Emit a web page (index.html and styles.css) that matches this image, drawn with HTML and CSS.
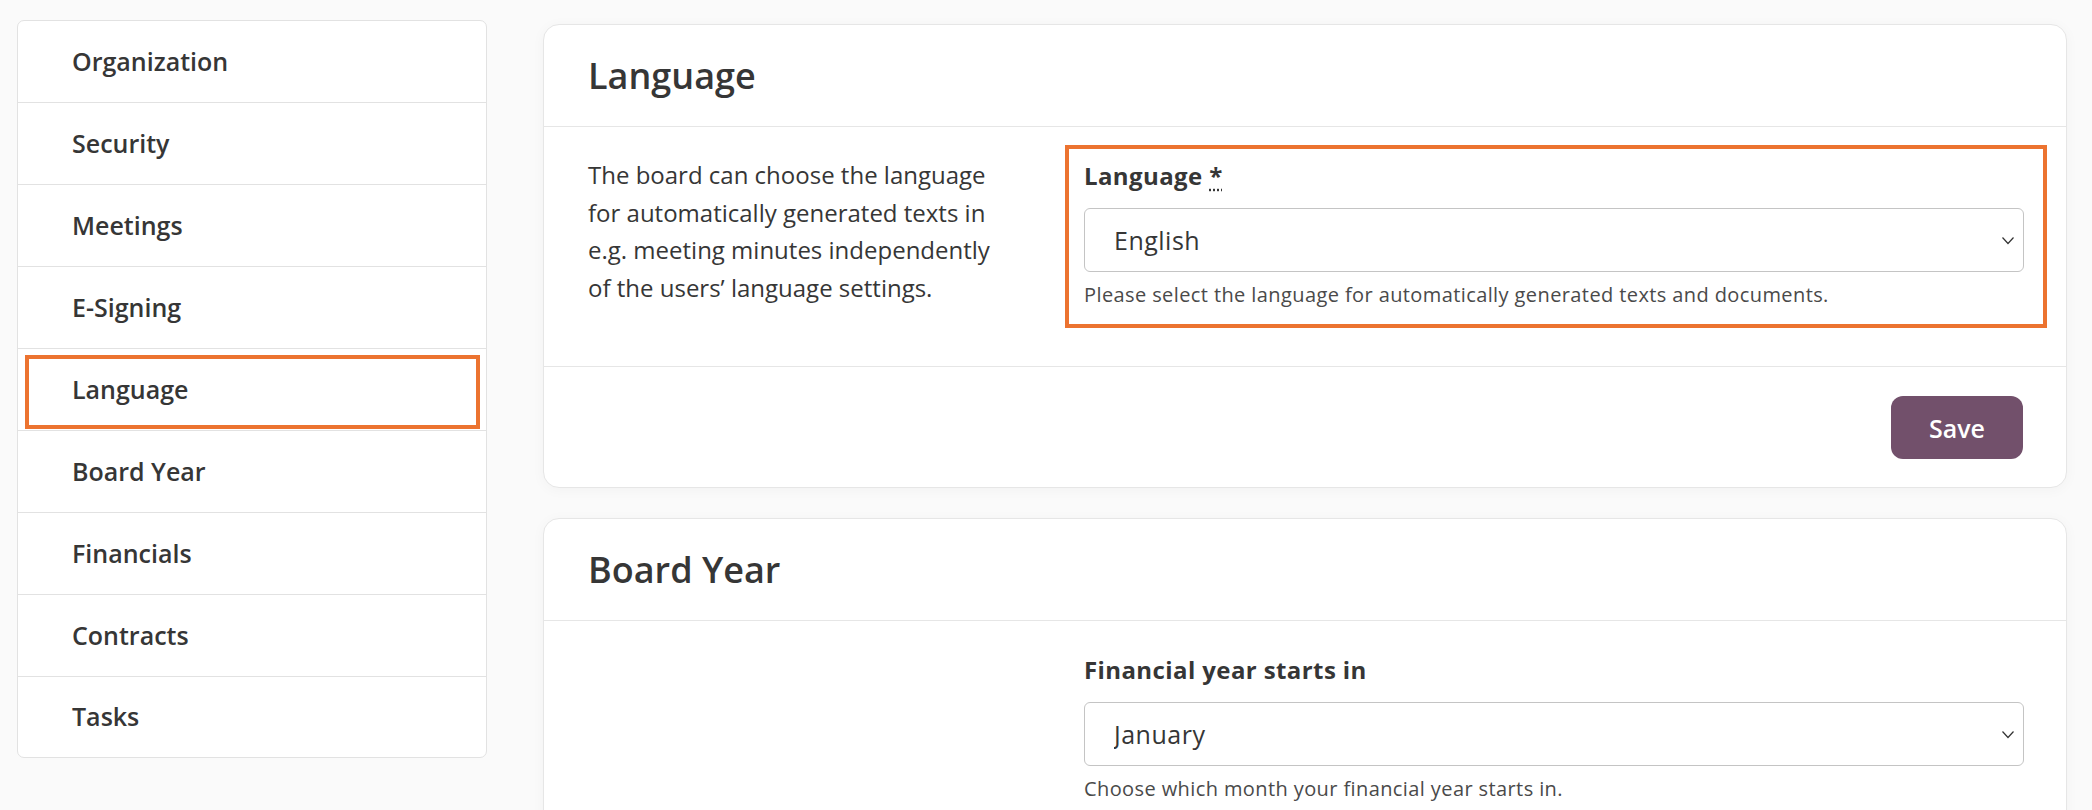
FILE: index.html
```html
<!DOCTYPE html>
<html lang="en">
<head>
    <meta charset="UTF-8">
    <meta name="viewport" content="width=device-width, initial-scale=1.0">
    <title>Settings - Language</title>
    <link rel="stylesheet" href="styles.css">
</head>
<body>
    <div class="layout">
        <!-- Settings navigation -->
        <nav class="side-nav">
            <a href="#" class="nav-item">Organization</a>
            <a href="#" class="nav-item">Security</a>
            <a href="#" class="nav-item">Meetings</a>
            <a href="#" class="nav-item">E-Signing</a>
            <a href="#" class="nav-item highlighted">Language</a>
            <a href="#" class="nav-item">Board Year</a>
            <a href="#" class="nav-item">Financials</a>
            <a href="#" class="nav-item">Contracts</a>
            <a href="#" class="nav-item">Tasks</a>
        </nav>

        <main class="content">
            <section class="card">
                <div class="card-header">
                    <h2 class="card-title">Language</h2>
                </div>
                <div class="card-body">
                    <p class="card-intro">
                        The board can choose the language for automatically generated texts in e.g. meeting minutes independently of the users’ language settings.
                    </p>
                    <div class="form-group highlight-box">
                        <label class="form-label" for="language">Language <abbr title="required">*</abbr></label>
                        <div class="select-wrap">
                            <select id="language" class="form-select">
                                <option>English</option>
                            </select>
                            <svg class="chevron" viewBox="0 0 16 16" width="16" height="16"><path d="M2.5 5.5l5.5 6 5.5-6" fill="none" stroke="#333" stroke-width="1.2"/></svg>
                        </div>
                        <p class="form-help">Please select the language for automatically generated texts and documents.</p>
                    </div>
                </div>
                <div class="card-footer">
                    <button class="btn-save">Save</button>
                </div>
            </section>

            <section class="card">
                <div class="card-header">
                    <h2 class="card-title">Board Year</h2>
                </div>
                <div class="card-body">
                    <p class="card-intro"></p>
                    <div class="form-group">
                        <label class="form-label" for="fy-start">Financial year starts in</label>
                        <div class="select-wrap">
                            <select id="fy-start" class="form-select">
                                <option>January</option>
                            </select>
                            <svg class="chevron" viewBox="0 0 16 16" width="16" height="16"><path d="M2.5 5.5l5.5 6 5.5-6" fill="none" stroke="#333" stroke-width="1.2"/></svg>
                        </div>
                        <p class="form-help">Choose which month your financial year starts in.</p>
                    </div>
                </div>
            </section>
        </main>
    </div>
</body>
</html>
```

FILE: styles.css
```css
* {
    margin: 0;
    padding: 0;
    box-sizing: border-box;
}

body {
    font-family: 'Open Sans', 'Lato', sans-serif;
    background: #fafafa;
    color: #363636;
    overflow: hidden;
}

.layout {
    display: grid;
    grid-template-columns: 470px 1fr;
    gap: 56px;
    padding: 20px 25px 0 17px;
    align-items: start;
}

/* Side navigation */
.side-nav {
    display: flex;
    flex-direction: column;
    background: #fff;
    border: 1px solid #e2e2e2;
    border-radius: 7px;
}

.nav-item {
    position: relative;
    display: flex;
    align-items: center;
    height: 82px;
    padding-left: 54px;
    padding-bottom: 2px;
    font-size: 25px;
    font-weight: 600;
    color: #363636;
    text-decoration: none;
    border-bottom: 1px solid #e2e2e2;
}

.nav-item:last-child {
    height: 80px;
    border-bottom: none;
}

.nav-item.highlighted::after {
    content: '';
    position: absolute;
    top: 6px;
    right: 6px;
    bottom: 1px;
    left: 7px;
    border: 4px solid #ec7330;
}

/* Cards */
.content {
    display: flex;
    flex-direction: column;
    gap: 30px;
    padding-top: 4px;
}

.card {
    background: #fff;
    border: 1px solid #e6e6e6;
    border-radius: 16px;
    box-shadow: 0 2px 14px rgba(0, 0, 0, 0.035);
}

.card-header {
    height: 102px;
    display: flex;
    align-items: center;
    padding: 0 44px;
    border-bottom: 1px solid #e6e6e6;
}

.card-title {
    font-size: 36px;
    font-weight: 600;
    color: #363636;
}

.card-body {
    display: grid;
    grid-template-columns: 425px 1fr;
    gap: 52px;
    padding: 18px 19px 38px 44px;
}

.card-intro {
    font-size: 24px;
    line-height: 37.5px;
    padding-top: 11px;
}

.form-group {
    padding: 10px 19px 16px 15px;
    border: 4px solid transparent;
}

.highlight-box {
    border-color: #ec7330;
}

.form-label {
    display: block;
    font-size: 24px;
    font-weight: 700;
    letter-spacing: 0.4px;
    color: #363636;
    margin-bottom: 16px;
}

.form-label abbr {
    text-decoration: underline dotted;
    text-underline-offset: 4px;
}

.select-wrap {
    position: relative;
}

.form-select {
    width: 100%;
    height: 64px;
    padding: 0 29px;
    font-family: inherit;
    font-size: 25px;
    letter-spacing: 0.5px;
    color: #363636;
    background: #fff;
    border: 1px solid #c4c4c4;
    border-radius: 6px;
    appearance: none;
}

.chevron {
    position: absolute;
    right: 8px;
    top: 24px;
    pointer-events: none;
}

.form-help {
    font-size: 20px;
    letter-spacing: 0.4px;
    color: #4a4a4a;
    margin-top: 9px;
}

.card-footer {
    display: flex;
    justify-content: flex-end;
    padding: 29px 43px 28px;
    border-top: 1px solid #e6e6e6;
}

.btn-save {
    width: 132px;
    height: 63px;
    background: #72506b;
    color: #fff;
    border: none;
    border-radius: 12px;
    font-family: inherit;
    font-size: 25px;
    font-weight: 600;
    cursor: pointer;
}
```
